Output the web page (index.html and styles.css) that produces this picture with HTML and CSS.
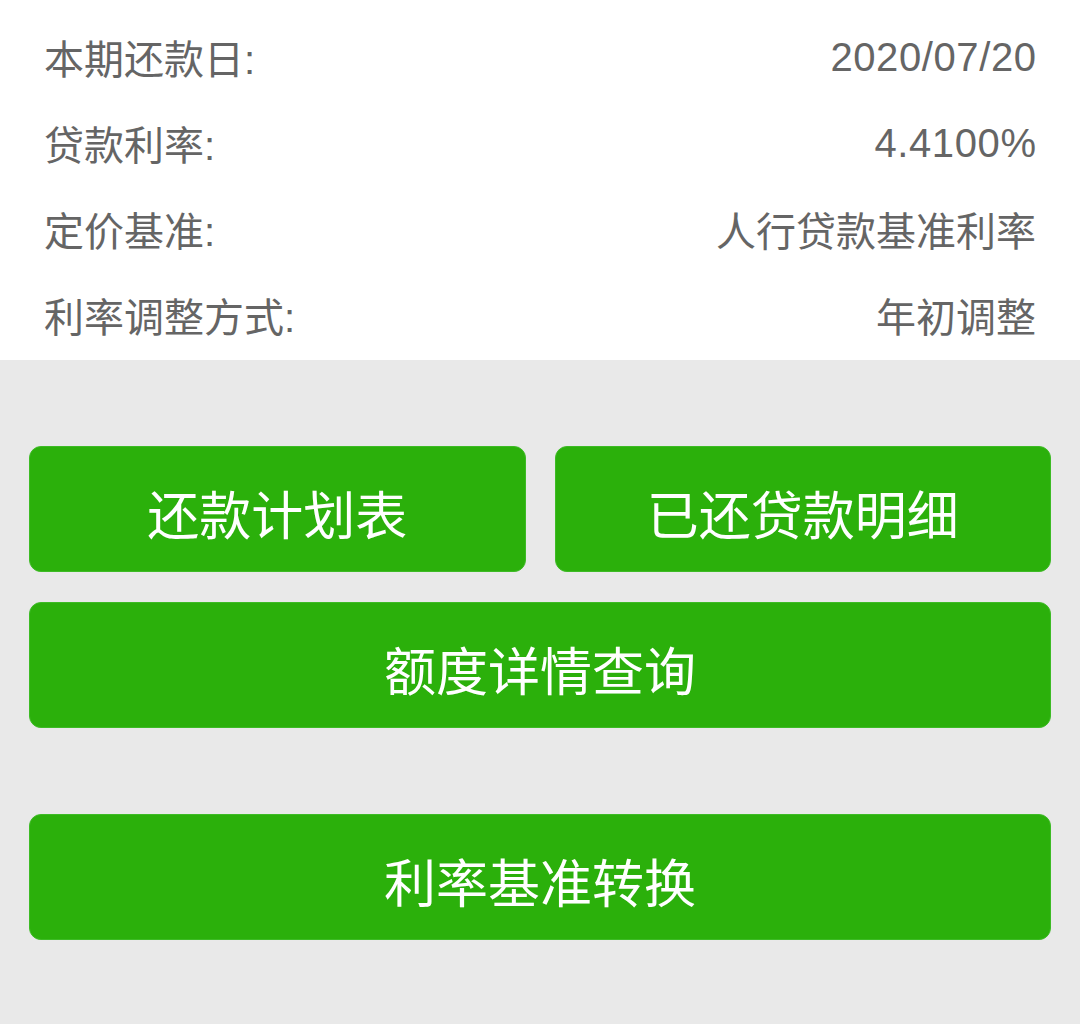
FILE: index.html
```html
<!DOCTYPE html>
<html lang="zh-CN">
<head>
<meta charset="utf-8">
<title>贷款详情</title>
<link rel="stylesheet" href="styles.css">
</head>
<body>
<div class="page">
  <section class="info">
    <div class="row"><span class="label">本期还款日:</span><span class="value num">2020/07/20</span></div>
    <div class="row"><span class="label">贷款利率:</span><span class="value num">4.4100%</span></div>
    <div class="row"><span class="label">定价基准:</span><span class="value">人行贷款基准利率</span></div>
    <div class="row"><span class="label">利率调整方式:</span><span class="value">年初调整</span></div>
  </section>
  <section class="actions">
    <div class="btn-row">
      <button class="btn">还款计划表</button>
      <button class="btn">已还贷款明细</button>
    </div>
    <button class="btn">额度详情查询</button>
    <button class="btn btn-sep">利率基准转换</button>
  </section>
</div>
</body>
</html>
```

FILE: styles.css
```css
* { box-sizing: border-box; }
html, body {
  margin: 0;
  padding: 0;
  background: #e9e9e9;
}
body {
  font-family: "Liberation Sans", "Noto Sans CJK SC", sans-serif;
}
.page {
  width: 1080px;
  min-height: 1024px;
  background: #e9e9e9;
}
.info {
  background: #ffffff;
  padding: 14px 44px 2px 44px;
}
.row {
  height: 86px;
  display: flex;
  align-items: center;
  justify-content: space-between;
  font-size: 40px;
  color: #656565;
}
.value.num {
  letter-spacing: 0.6px;
  margin-right: -0.6px;
}
.actions {
  padding: 86px 29px 0 29px;
  display: flex;
  flex-direction: column;
  gap: 30px;
}
.btn-row {
  display: grid;
  grid-template-columns: 1fr 1fr;
  gap: 29px;
}
.btn {
  height: 126px;
  width: 100%;
  margin: 0;
  border: 1px solid #3dbb25;
  border-radius: 12px;
  background: #2bb00b;
  color: #ffffff;
  font-family: "Noto Sans CJK SC", sans-serif;
  font-size: 52px;
  padding: 6px 0 0 0;
  display: flex;
  align-items: center;
  justify-content: center;
}
.btn-sep {
  margin-top: 56px;
}
```
